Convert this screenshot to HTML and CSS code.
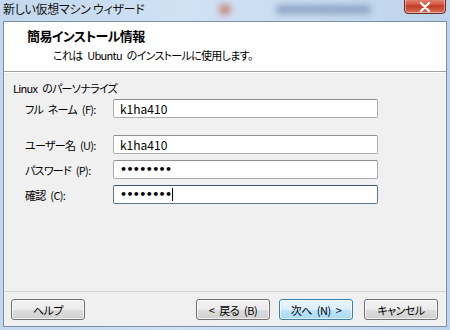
FILE: index.html
```html
<!DOCTYPE html>
<html>

<head>
    <title>新しい仮想マシン ウィザード</title>
    <link rel="stylesheet" href="styles.css">
</head>

<body>

    <div class="window">

        <!-- Title bar -->
        <div class="titlebar">
            <span class="title">新しい仮想マシン ウィザード</span>
            <div class="glass-blob blob-a"></div>
            <div class="glass-blob blob-b"></div>
            <button class="close-btn">
                <svg width="12" height="10" viewBox="0 0 12 10">
                    <path d="M2 1 L10 9 M10 1 L2 9" stroke="#fff" stroke-width="2.4" stroke-linecap="round" />
                </svg>
            </button>
        </div>

        <div class="client">

            <!-- Header -->
            <div class="header">
                <div class="header-title">簡易インストール情報</div>
                <div class="header-sub">これは Ubuntu のインストールに使用します。</div>
            </div>

            <!-- Form -->
            <div class="content">
                <div class="group-label">Linux のパーソナライズ</div>

                <div class="field-row">
                    <label for="fullname">フル ネーム (F):</label>
                    <input type="text" id="fullname" class="field" value="k1ha410">
                </div>

                <div class="field-row gap-top">
                    <label for="username">ユーザー名 (U):</label>
                    <input type="text" id="username" class="field" value="k1ha410">
                </div>

                <div class="field-row">
                    <label>パスワード (P):</label>
                    <div class="field"><span class="dots">••••••••</span></div>
                </div>

                <div class="field-row">
                    <label>確認 (C):</label>
                    <div class="field focused"><span class="dots">••••••••</span><span class="caret"></span></div>
                </div>
            </div>

            <!-- Buttons -->
            <div class="footer">
                <button class="btn">ヘルプ</button>
                <div class="spacer"></div>
                <button class="btn">&lt; 戻る (B)</button>
                <button class="btn btn-default">次へ (N) &gt;</button>
                <button class="btn btn-cancel">キャンセル</button>
            </div>

        </div>
    </div>

</body>

</html>
```

FILE: styles.css
```css
body {
    margin: 0;
    width: 450px;
    height: 330px;
    overflow: hidden;
    background-color: #b9d1ea;
    font-family: "Noto Sans CJK JP", "Liberation Sans", sans-serif;
    font-size: 11px;
    letter-spacing: -0.7px;
    word-spacing: 3px;
    font-feature-settings: "palt";
    color: #000;
}

.window {
    display: flex;
    flex-direction: column;
    height: 330px;
    background: linear-gradient(to right, #c3d8ee, #cfe1f3 40%, #c9dcf0 70%, #bcd3eb);
}

.titlebar {
    position: relative;
    height: 20px;
    display: flex;
    align-items: flex-start;
    overflow: hidden;
}

.title {
    position: relative;
    z-index: 1;
    margin: 1px 0 0 3px;
    font-size: 12px;
    letter-spacing: -0.3px;
    word-spacing: 0;
    line-height: 16px;
    color: #111;
}

.glass-blob {
    position: absolute;
    filter: blur(3px);
}

.blob-a {
    left: 219px;
    top: 4px;
    width: 12px;
    height: 11px;
    border-radius: 50%;
    background-color: #c98a7e;
}

.blob-b {
    left: 276px;
    top: 5px;
    width: 95px;
    height: 9px;
    border-radius: 3px;
    background-color: #8ea7c4;
}

.close-btn {
    position: absolute;
    right: 4px;
    top: -4px;
    width: 42px;
    height: 18px;
    padding: 3px 0 0 0;
    border: 1px solid #6d2a23;
    border-radius: 0 0 4px 4px;
    background: linear-gradient(#e6a08e, #d2513c 50%, #c13a24 55%, #d7705a);
    display: flex;
    align-items: center;
    justify-content: center;
    box-shadow: inset 0 0 0 1px rgba(255, 255, 255, 0.45);
}

.client {
    flex: 1;
    margin: 1px 3px 3px 3px;
    display: flex;
    flex-direction: column;
    background-color: #f0f0f0;
    border: 1px solid #7d8fa6;
}

.header {
    height: 49px;
    background-color: #fff;
    border-bottom: 1px solid #a0a0a0;
    box-shadow: 0 1px 0 #fff;
}

.header-title {
    margin: 6px 0 0 23px;
    font-size: 13px;
    font-weight: bold;
    letter-spacing: -0.6px;
    line-height: 16px;
}

.header-sub {
    margin: 3px 0 0 49px;
    line-height: 16px;
}

.content {
    padding: 8px 0 0 9px;
}

.group-label {
    line-height: 16px;
}

.field-row {
    display: grid;
    grid-template-columns: 88px 265px;
    align-items: center;
    margin-top: 6px;
    padding-left: 12px;
}

.field-row:nth-child(2) {
    margin-top: 3px;
}

.field-row.gap-top {
    margin-top: 17px;
}

.field {
    box-sizing: border-box;
    height: 19px;
    padding: 0 6px;
    border: 1px solid #abadb3;
    border-top-color: #8c8f96;
    border-radius: 2px;
    background-color: #fff;
    font-family: "Noto Sans CJK JP", "Liberation Sans", sans-serif;
    font-size: 12px;
    letter-spacing: 0;
    word-spacing: 0;
    color: #000;
    outline: none;
}

div.field {
    display: flex;
    align-items: center;
}

.field.focused {
    border-color: #5f7a98;
    border-top-color: #3d556e;
}

.dots {
    font-family: "DejaVu Sans", sans-serif;
    font-size: 11px;
    font-weight: bold;
    letter-spacing: -0.6px;
    line-height: 12px;
}

.caret {
    width: 1px;
    height: 13px;
    margin-left: 1px;
    background-color: #000;
}

.footer {
    margin-top: auto;
    height: 27px;
    display: flex;
    align-items: flex-start;
    gap: 9px;
    padding: 7px 8px 0 7px;
    border-top: 1px solid #d5d5d5;
}

.spacer {
    flex: 1;
}

.btn {
    width: 74px;
    height: 21px;
    padding: 0;
    border: 1px solid #707070;
    border-radius: 3px;
    background: linear-gradient(#f2f2f2, #ebebeb 50%, #dddddd 51%, #cfcfcf);
    box-shadow: inset 0 0 0 1px rgba(255, 255, 255, 0.7);
    font-family: "Noto Sans CJK JP", "Liberation Sans", sans-serif;
    font-size: 11px;
    letter-spacing: -0.5px;
    word-spacing: 3px;
    font-feature-settings: "palt";
    color: #000;
}

.btn-default {
    border-color: #3c7fb1;
    background: linear-gradient(#eaf6fd, #d9f0fc 50%, #bee6fd 51%, #a7d9f5);
}

.btn-cancel {
    margin-left: 2px;
}
```
